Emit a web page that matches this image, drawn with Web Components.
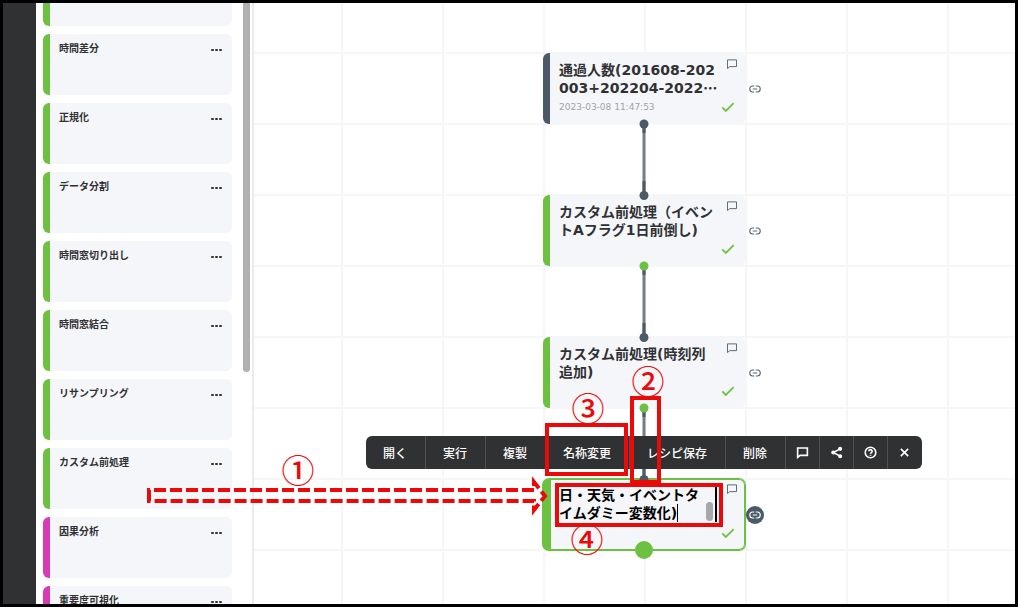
<!DOCTYPE html>
<html lang="ja">
<head>
<meta charset="utf-8">
<title>レシピ</title>
<style>
    html, body {
        margin: 0;
        height: 100%;
    }
    body {
        font-family: "DejaVu Sans", "Noto Sans CJK JP", sans-serif;
        color: #303133;
    }
</style>
</head>
<body>
<recipe-app>
    <tool-palette slot="palette">
        <palette-item></palette-item>
        <palette-item>時間差分</palette-item>
        <palette-item>正規化</palette-item>
        <palette-item>データ分割</palette-item>
        <palette-item>時間窓切り出し</palette-item>
        <palette-item>時間窓結合</palette-item>
        <palette-item>リサンプリング</palette-item>
        <palette-item>カスタム前処理</palette-item>
        <palette-item kind="analysis">因果分析</palette-item>
        <palette-item kind="analysis">重要度可視化</palette-item>
    </tool-palette>
    <recipe-canvas slot="canvas">
        <node-link x="385" y="121"></node-link>
        <node-link x="385" y="263" kind="process"></node-link>
        <node-link x="385" y="405" kind="process"></node-link>
        <recipe-node x="289" y="50" kind="data">通過人数(201608-202<br>003+202204-2022<b>…</b><span slot="date">2023-03-08 11:47:53</span></recipe-node>
        <recipe-node x="289" y="192">カスタム前処理（イベン<br>トAフラグ1日前倒し)</recipe-node>
        <recipe-node x="289" y="334">カスタム前処理(時刻列<br>追加)</recipe-node>
        <recipe-node x="289" y="476" selected><name-editor value="日・天気・イベントタ
イムダミー変数化)"></name-editor></recipe-node>
        <node-toolbar x="112" y="433"></node-toolbar>
    </recipe-canvas>
    <guide-overlay slot="guide"></guide-overlay>
</recipe-app>

<script>
const ICONS = {
    comment: '<path d="M2 2.5h12v9H5L2 14z"/>',
    check: '<path d="M1.5 8.5l4 4 9-9"/>',
    link: '<path d="M7 4H5a4 4 0 0 0 0 8h2M9 4h2a4 4 0 0 1 0 8H9M5 8h6"/>',
    share: '<path d="M12.500 3.500L4 8l8.500 4.500"/><g fill="currentColor"><circle cx="12.500" cy="3.500" r="1.500"/><circle cx="4" cy="8" r="1.500"/><circle cx="12.500" cy="12.500" r="1.500"/></g>',
    help: '<circle cx="8" cy="8" r="6.500"/><path d="M6 6.500a2 2 0 1 1 3 1.700q-1 .5-1 1.300M8 10.700v1.300"/>',
    close: '<path d="M3.500 3.500l9 9M12.500 3.500l-9 9"/>'
};

function icon(name, width = 1.5) {
    return `<svg viewBox="0 0 16 16" fill="none" stroke="currentColor" stroke-width="${width}" aria-hidden="true">${ICONS[name]}</svg>`;
}

// Base for everything that has a free place on the canvas
class PlacedElement extends HTMLElement {
    constructor() {
        super();
        this.attachShadow({ mode: 'open' });
    }

    connectedCallback() {
        this.style.left = `${this.getAttribute('x')}px`;
        this.style.top = `${this.getAttribute('y')}px`;
    }
}

class RecipeApp extends HTMLElement {
    constructor() {
        super();
        this.attachShadow({ mode: 'open' });
        this.shadowRoot.innerHTML = `
            <style>
                :host {
                    display: grid;
                    grid-template-columns: 33px 218px minmax(0, 1fr);
                    grid-template-rows: minmax(0, 1fr);
                    position: relative;
                    box-sizing: border-box;
                    height: 100vh;
                    border: 3px solid #000;
                    background: #fff;
                    overflow: hidden;
                }
                nav {
                    background: #303133;
                }
            </style>
            <nav></nav>
            <slot name="palette"></slot>
            <slot name="canvas"></slot>
            <slot name="guide"></slot>
        `;
    }
}

class ToolPalette extends HTMLElement {
    constructor() {
        super();
        this.attachShadow({ mode: 'open' });
        this.shadowRoot.innerHTML = `
            <style>
                :host {
                    display: block;
                    position: relative;
                    border-right: 2px solid #ebecf0;
                    overflow: hidden;
                }
                .list {
                    display: flex;
                    flex-direction: column;
                    gap: 8px;
                    box-sizing: border-box;
                    height: 100%;
                    padding: 0 20px 0 7px;
                    overflow-y: auto;
                    scrollbar-width: none;
                }
                .thumb {
                    position: absolute;
                    top: 0;
                    right: 2px;
                    width: 7px;
                    height: 369px;
                    border-radius: 0 0 4px 4px;
                    background: #b0b0b0;
                }
            </style>
            <div class="list"><slot></slot></div>
            <div class="thumb"></div>
        `;
    }

    connectedCallback() {
        this.shadowRoot.querySelector('.list').scrollTop = 38;
    }
}

class PaletteItem extends HTMLElement {
    constructor() {
        super();
        this.attachShadow({ mode: 'open' });
        this.shadowRoot.innerHTML = `
            <style>
                :host {
                    display: flex;
                    flex: none;
                    justify-content: space-between;
                    align-items: flex-start;
                    box-sizing: border-box;
                    height: 61px;
                    padding: 7px 10px 0 9px;
                    border-left: 7px solid #6cc240;
                    border-radius: 6px;
                    background: #f5f6fa;
                    font-family: "Noto Sans CJK JP", sans-serif;
                    font-size: 10px;
                    font-weight: 700;
                    line-height: 14px;
                }
                :host([kind="analysis"]) {
                    border-left-color: #d63ab4;
                }
                button {
                    display: flex;
                    gap: 1px;
                    padding: 8px 0 4px;
                    border: 0;
                    background: none;
                }
                i {
                    width: 3px;
                    height: 2px;
                    border-radius: 1px;
                    background: #303133;
                }
            </style>
            <span><slot></slot></span>
            <button aria-label="メニュー"><i></i><i></i><i></i></button>
        `;
    }
}

class RecipeCanvas extends HTMLElement {
    constructor() {
        super();
        this.attachShadow({ mode: 'open' });
        this.shadowRoot.innerHTML = `
            <style>
                :host {
                    display: block;
                    position: relative;
                    background:
                        linear-gradient(90deg, #f6f6f6 2px, transparent 2px) 87px 0 / 101px 71px,
                        linear-gradient(#f6f6f6 2px, transparent 2px) 0 49px / 101px 71px,
                        #fff;
                    overflow: hidden;
                }
            </style>
            <slot></slot>
        `;
    }
}

class RecipeNode extends PlacedElement {
    constructor() {
        super();
        this.shadowRoot.innerHTML = `
            <style>
                :host {
                    --bar: #6cc240;
                    display: grid;
                    grid-template-columns: 1fr 14px;
                    position: absolute;
                    box-sizing: border-box;
                    width: 202px;
                    height: 71px;
                    padding: 8px 7px 6px 9px;
                    border-left: 7px solid var(--bar);
                    border-radius: 6px;
                    background: #f5f6fa;
                }
                :host([kind="data"]) {
                    --bar: #4b5a66;
                }
                :host([selected]) {
                    padding-top: 7px;
                    box-shadow: inset 0 0 0 1px var(--bar), 0 0 0 1px var(--bar);
                }
                .name {
                    font-size: 14px;
                    font-weight: 600;
                    line-height: 18px;
                    white-space: nowrap;
                }
                /* the CJK ellipsis sits at mid height */
                ::slotted(b) {
                    font-family: "Noto Sans CJK JP", sans-serif;
                    line-height: 1;
                }
                .date {
                    margin-top: 4px;
                    font-size: 9px;
                    line-height: 12px;
                    color: #a0a3a8;
                }
                .side {
                    display: flex;
                    flex-direction: column;
                    justify-content: space-between;
                    align-items: flex-end;
                    margin: -3px 0 4px;
                }
                svg {
                    display: block;
                    width: 12px;
                    height: 12px;
                    color: #5b6872;
                }
                .ok {
                    margin-right: 3px;
                }
                .ok svg {
                    width: 14px;
                    height: 14px;
                    color: #6cc240;
                }
                .link {
                    display: flex;
                    justify-content: center;
                    align-items: center;
                    position: absolute;
                    top: 27px;
                    right: -19px;
                    width: 18px;
                    height: 18px;
                    padding: 0;
                    border: 0;
                    border-radius: 50%;
                    background: none;
                }
                .port {
                    display: none;
                    position: absolute;
                    top: 62px;
                    left: 85px;
                    width: 18px;
                    height: 18px;
                    border-radius: 50%;
                    background: var(--bar);
                }
                :host([selected]) .port {
                    display: block;
                }
                :host([selected]) .link {
                    background: #4b5a66;
                }
                :host([selected]) .link svg {
                    color: #fff;
                }
            </style>
            <div>
                <div class="name"><slot></slot></div>
                <div class="date"><slot name="date"></slot></div>
            </div>
            <div class="side">${icon('comment', 1.3)}<span class="ok">${icon('check', 2)}</span></div>
            <button class="link" aria-label="リンク">${icon('link')}</button>
            <div class="port"></div>
        `;
    }
}

class NameEditor extends HTMLElement {
    constructor() {
        super();
        this.attachShadow({ mode: 'open' });
        this.shadowRoot.innerHTML = `
            <style>
                :host {
                    display: block;
                    position: relative;
                    width: 158px;
                    height: 36px;
                }
                textarea {
                    display: block;
                    box-sizing: border-box;
                    width: 100%;
                    height: 100%;
                    padding: 0;
                    border: 0;
                    border-right: 2px solid #000;
                    outline: 0;
                    background: #f5f6fa;
                    color: #000;
                    font: inherit;
                    line-height: 18px;
                    resize: none;
                    overflow: hidden;
                }
                .thumb {
                    position: absolute;
                    right: 4px;
                    bottom: 1px;
                    width: 7px;
                    height: 19px;
                    border-radius: 4px;
                    background: #a8a8a8;
                }
                .caret {
                    position: absolute;
                    left: 118px;
                    bottom: 0;
                    width: 1px;
                    height: 18px;
                    background: #000;
                }
            </style>
            <textarea aria-label="名称"></textarea>
            <div class="thumb"></div>
            <div class="caret"></div>
        `;
    }

    connectedCallback() {
        this.shadowRoot.querySelector('textarea').value = this.getAttribute('value');
    }
}

class NodeLink extends PlacedElement {
    constructor() {
        super();
        this.shadowRoot.innerHTML = `
            <style>
                :host {
                    --from: #4b5a66;
                    position: absolute;
                    z-index: 1;
                    width: 10px;
                    height: 82px;
                    margin-top: -5px;
                }
                :host([kind="process"]) {
                    --from: #6cc240;
                }
                svg {
                    display: block;
                }
            </style>
            <svg width="10" height="82" aria-hidden="true">
                <path d="M5 5v71" stroke="#6f7f8a" stroke-width="3"/>
                <path d="M5 5v9M5 62v14" stroke="#4b5a66" stroke-width="3"/>
                <circle cx="5" cy="5" r="4.500" fill="var(--from)"/>
                <circle cx="5" cy="76.500" r="4.500" fill="#4b5a66"/>
            </svg>
        `;
    }
}

class NodeToolbar extends PlacedElement {
    constructor() {
        super();
        this.shadowRoot.innerHTML = `
            <style>
                :host {
                    display: flex;
                    position: absolute;
                    z-index: 2;
                    height: 33px;
                    border-radius: 6px;
                    background: #303133;
                    overflow: hidden;
                }
                button {
                    display: flex;
                    align-items: center;
                    padding: 0 18px 0 17px;
                    border: 0;
                    border-right: 1px solid #505153;
                    background: none;
                    color: #fff;
                    font: 500 12px "Noto Sans CJK JP", sans-serif;
                    white-space: nowrap;
                }
                button.icon {
                    padding: 0 10px;
                }
                button:last-child {
                    padding-right: 11px;
                    border-right: 0;
                }
                svg {
                    width: 13px;
                    height: 13px;
                }
            </style>
            <button>開く</button>
            <button>実行</button>
            <button>複製</button>
            <button>名称変更</button>
            <button>レシピ保存</button>
            <button>削除</button>
            <button class="icon" aria-label="コメント">${icon('comment', 2)}</button>
            <button class="icon" aria-label="共有">${icon('share', 2)}</button>
            <button class="icon" aria-label="ヘルプ">${icon('help', 2)}</button>
            <button class="icon" aria-label="閉じる">${icon('close', 2)}</button>
        `;
    }
}

// Numbered steps drawn over the whole screen
class GuideOverlay extends HTMLElement {
    constructor() {
        super();
        this.attachShadow({ mode: 'open' });
        this.shadowRoot.innerHTML = `
            <style>
                :host {
                    position: absolute;
                    top: -3px;
                    left: -3px;
                    z-index: 3;
                    pointer-events: none;
                }
                svg {
                    display: block;
                    overflow: visible;
                }
                text {
                    font: 500 33px "Noto Sans CJK JP", sans-serif;
                    fill: #ea0a0a;
                    stroke: none;
                    text-anchor: middle;
                }
            </style>
            <svg width="1" height="1" fill="none" stroke="#ea0a0a" stroke-width="4">
                <path stroke-dasharray="12 4" d="M149 501v-11h385v-8l11 14-11 14v-9z"/>
                <rect x="632" y="398" width="27" height="84"/>
                <rect x="547" y="425" width="79" height="49"/>
                <rect x="557" y="485" width="164" height="40"/>
                <text x="298" y="483">①</text>
                <text x="648" y="394">②</text>
                <text x="588" y="421">③</text>
                <text x="587" y="552">④</text>
            </svg>
        `;
    }
}

customElements.define('recipe-app', RecipeApp);
customElements.define('palette-item', PaletteItem);
customElements.define('tool-palette', ToolPalette);
customElements.define('recipe-canvas', RecipeCanvas);
customElements.define('name-editor', NameEditor);
customElements.define('recipe-node', RecipeNode);
customElements.define('node-link', NodeLink);
customElements.define('node-toolbar', NodeToolbar);
customElements.define('guide-overlay', GuideOverlay);
</script>
</body>
</html>
